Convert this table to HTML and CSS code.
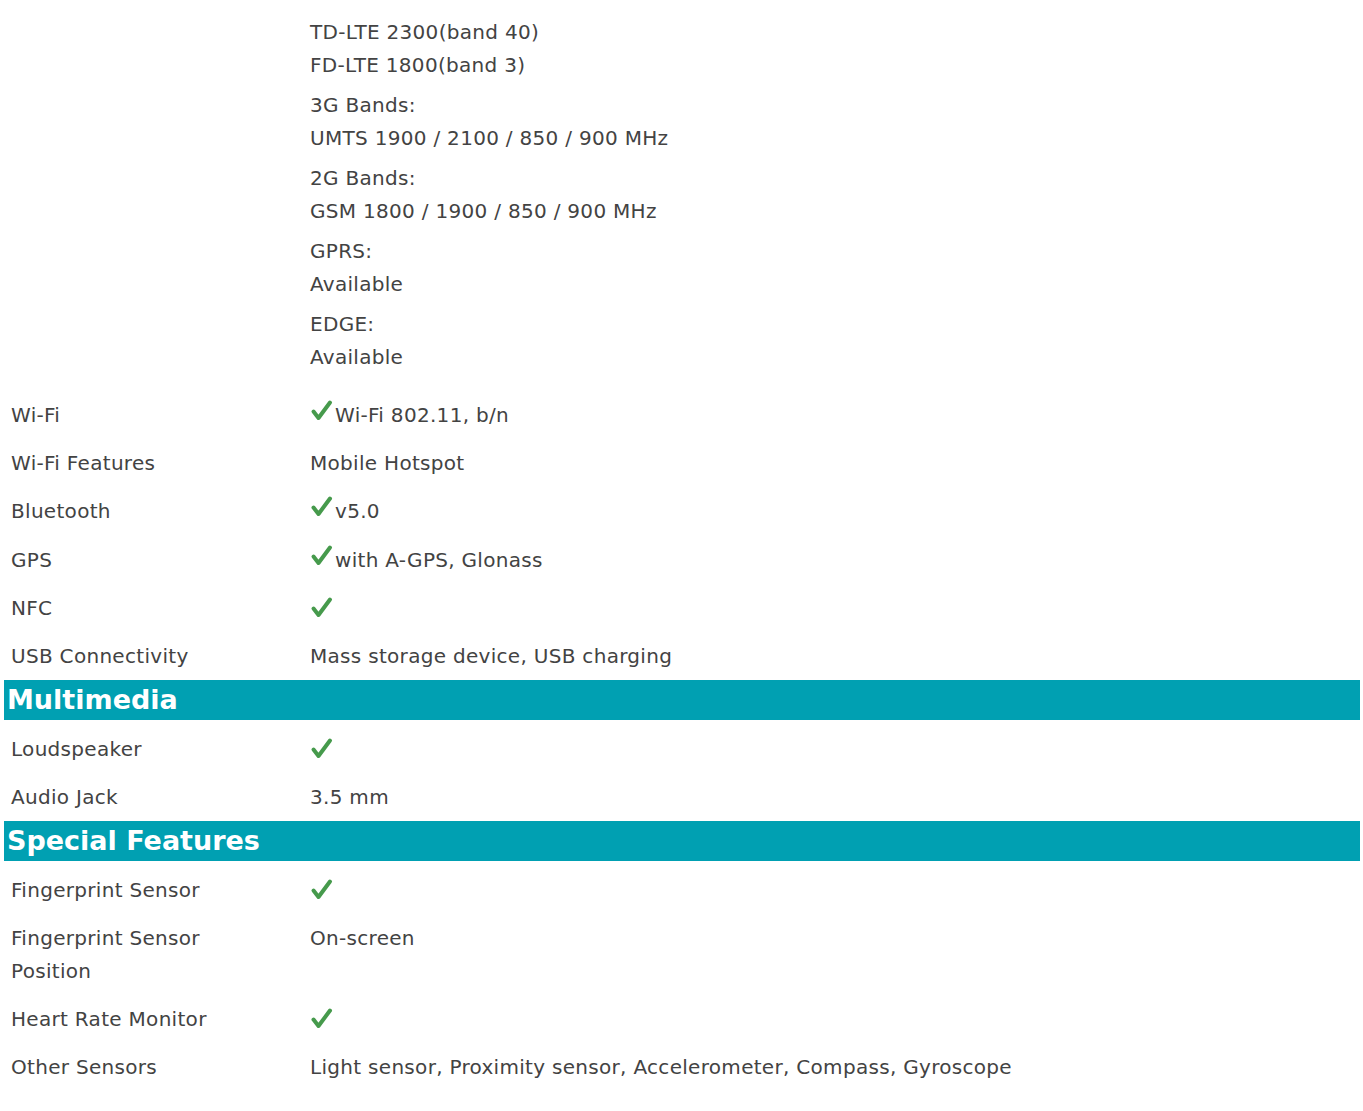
FILE: index.html
```html
<!DOCTYPE html>
<html>
<head>
<meta charset="utf-8">
<link rel="stylesheet" href="styles.css">
</head>
<body>
<div class="specs">
  <div class="row top">
    <div class="label"></div>
    <div class="value">
      <p>TD-LTE 2300(band 40)<br>FD-LTE 1800(band 3)</p>
      <p>3G Bands:<br>UMTS 1900 / 2100 / 850 / 900 MHz</p>
      <p>2G Bands:<br>GSM 1800 / 1900 / 850 / 900 MHz</p>
      <p>GPRS:<br>Available</p>
      <p>EDGE:<br>Available</p>
    </div>
  </div>
  <div class="row"><div class="label">Wi-Fi</div><div class="value"><span class="check"><svg viewBox="0 0 24 24"><polyline points="3.5,12.5 8.5,19 20,3.5"/></svg></span>Wi-Fi 802.11, b/n</div></div>
  <div class="row"><div class="label">Wi-Fi Features</div><div class="value">Mobile Hotspot</div></div>
  <div class="row"><div class="label">Bluetooth</div><div class="value"><span class="check"><svg viewBox="0 0 24 24"><polyline points="3.5,12.5 8.5,19 20,3.5"/></svg></span>v5.0</div></div>
  <div class="row"><div class="label">GPS</div><div class="value"><span class="check"><svg viewBox="0 0 24 24"><polyline points="3.5,12.5 8.5,19 20,3.5"/></svg></span>with A-GPS, Glonass</div></div>
  <div class="row"><div class="label">NFC</div><div class="value"><span class="check solo"><svg viewBox="0 0 24 24"><polyline points="3.5,12.5 8.5,19 20,3.5"/></svg></span></div></div>
  <div class="row"><div class="label">USB Connectivity</div><div class="value">Mass storage device, USB charging</div></div>

  <h2 class="section">Multimedia</h2>
  <div class="row"><div class="label">Loudspeaker</div><div class="value"><span class="check solo"><svg viewBox="0 0 24 24"><polyline points="3.5,12.5 8.5,19 20,3.5"/></svg></span></div></div>
  <div class="row"><div class="label">Audio Jack</div><div class="value">3.5 mm</div></div>

  <h2 class="section">Special Features</h2>
  <div class="row"><div class="label">Fingerprint Sensor</div><div class="value"><span class="check solo"><svg viewBox="0 0 24 24"><polyline points="3.5,12.5 8.5,19 20,3.5"/></svg></span></div></div>
  <div class="row"><div class="label">Fingerprint Sensor Position</div><div class="value">On-screen</div></div>
  <div class="row"><div class="label">Heart Rate Monitor</div><div class="value"><span class="check solo"><svg viewBox="0 0 24 24"><polyline points="3.5,12.5 8.5,19 20,3.5"/></svg></span></div></div>
  <div class="row"><div class="label">Other Sensors</div><div class="value">Light sensor, Proximity sensor, Accelerometer, Compass, Gyroscope</div></div>
</div>
</body>
</html>
```

FILE: styles.css
```css
html, body {
  margin: 0;
  padding: 0;
  background: #ffffff;
}

.specs {
  padding: 0 3px 0 4px;
  font-family: "DejaVu Sans", sans-serif;
  font-size: 20px;
  letter-spacing: 0.3px;
  color: #434343;
  line-height: 32.5px;
}

.row {
  display: grid;
  grid-template-columns: 299px 1fr;
  padding: 8.7px 0 7.1px;
}

.row.top {
  padding-top: 16px;
  padding-bottom: 17px;
}

.label {
  padding-left: 7px;
  padding-right: 60px;
}

.value {
  padding-left: 7px;
}

.value p {
  margin: 0 0 8px 0;
}

.value p:last-child {
  margin-bottom: 0;
}

.check {
  display: inline-block;
  width: 24px;
  height: 24px;
  vertical-align: -1px;
  margin-right: 1px;
}

.check.solo {
  vertical-align: -5px;
}

.check svg {
  width: 24px;
  height: 24px;
  display: block;
}

.check polyline {
  fill: none;
  stroke: #469a4c;
  stroke-width: 4;
  stroke-linecap: round;
  stroke-linejoin: round;
}

.section {
  margin: 0 0 4.5px 0;
  background: #00a0b2;
  color: #ffffff;
  font-size: 27px;
  letter-spacing: 0;
  font-weight: bold;
  line-height: 40px;
  height: 40px;
  padding-left: 3px;
}
```
